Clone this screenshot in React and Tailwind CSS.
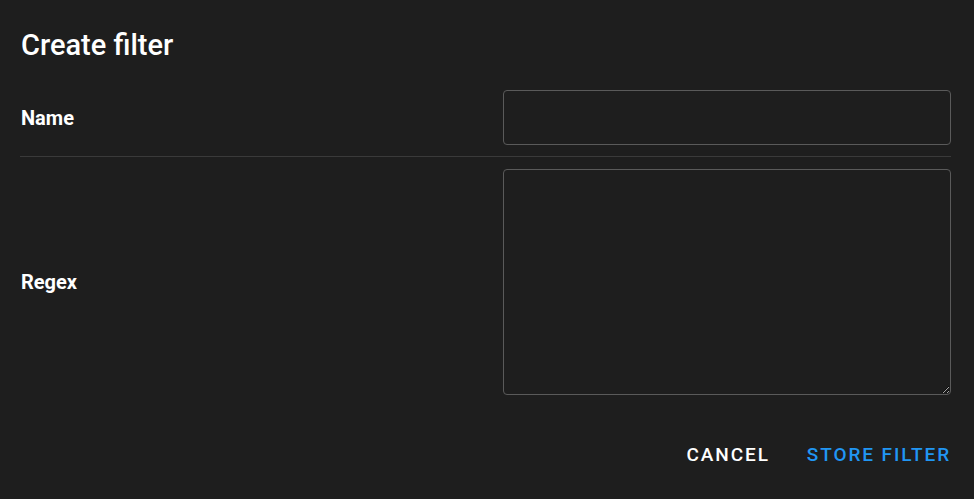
export default function App() {
  return (
    <div className="min-h-screen bg-[#1e1e1e] text-white font-['Roboto',sans-serif]">
      <div className="pl-5 pr-[23px] pt-[27px]">
        {/* Title */}
        <h1 className="text-[29px] font-medium leading-9 ml-px">Create filter</h1>

        {/* Name row */}
        <div className="mt-[15px] flex items-center border-b border-[#3a3a3a] pt-3 pb-[11px]">
          <label className="flex-1 text-[20px] font-bold ml-px">Name</label>
          <input
            type="text"
            className="w-[448px] h-[55px] rounded border border-[#5a5a5a] bg-transparent px-3 outline-none"
          />
        </div>

        {/* Regex row */}
        <div className="flex items-center py-3">
          <label className="flex-1 text-[20px] font-bold ml-px">Regex</label>
          <textarea className="w-[448px] h-[226px] rounded border border-[#5a5a5a] bg-transparent px-3 py-2 outline-none" />
        </div>

        {/* Actions */}
        <div className="mt-[34px] flex justify-end gap-[37px] text-[19px] font-medium tracking-[0.1em]">
          <button className="uppercase">Cancel</button>
          <button className="uppercase text-[#2196f3]">Store filter</button>
        </div>
      </div>
    </div>
  );
}
